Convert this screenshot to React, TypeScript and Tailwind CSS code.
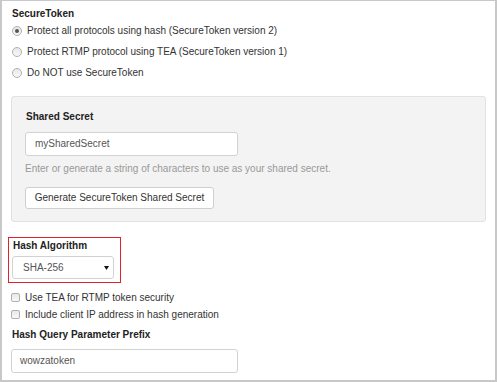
import React from 'react';

const Radio: React.FC<{ label: string; checked?: boolean }> = ({ label, checked }) => (
  <label className="flex items-center h-[21px] pl-[1px]">
    <span className="w-[10px] h-[10px] rounded-full border border-[#b0b0b0] bg-gradient-to-b from-[#e8e8e8] to-[#f8f8f8] flex items-center justify-center shrink-0">
      {checked && <span className="w-[4px] h-[4px] rounded-full bg-[#555]" />}
    </span>
    <span className="ml-[5px] text-[#333]">{label}</span>
  </label>
);

const Checkbox: React.FC<{ label: string }> = ({ label }) => (
  <label className="flex items-center h-[17px]">
    <span className="w-[9px] h-[9px] rounded-[2px] border border-[#b0b0b0] bg-gradient-to-b from-[#e8e8e8] to-[#f8f8f8] shrink-0" />
    <span className="ml-[5px] text-[#333]">{label}</span>
  </label>
);

const TextInput: React.FC<{ value: string; className?: string }> = ({ value, className }) => (
  <div className={`h-[24px] bg-white border border-[#d2d2d2] rounded-[3px] flex items-center text-[#555] ${className ?? ''}`}>
    {value}
  </div>
);

export default function App() {
  return (
    <div
      className="w-[497px] h-[382px] bg-white border-[#c8c8c8] border-t border-l-2 border-r-2 border-b-2 px-[9px] pt-[3px] text-[10px] leading-[14px]"
      style={{ fontFamily: '"Liberation Sans", Arial, sans-serif' }}
    >
      <h3 className="h-[16px] leading-[20px] font-bold text-[#222] pl-[1px]">SecureToken</h3>
      <div className="flex flex-col">
        <Radio label="Protect all protocols using hash (SecureToken version 2)" checked />
        <Radio label="Protect RTMP protocol using TEA (SecureToken version 1)" />
        <Radio label="Do NOT use SecureToken" />
      </div>

      <div className="mt-[13px] h-[126px] bg-[#f3f3f3] border border-[#e2e2e2] rounded-[3px] pt-[12px] pl-[13px]">
        <div className="h-[16px] leading-[16px] font-bold text-[#222] pl-[1px]">Shared Secret</div>
        <TextInput value="mySharedSecret" className="mt-[7px] w-[213px] h-[23px] pl-[9px]" />
        <p className="mt-[6px] text-[#999]">Enter or generate a string of characters to use as your shared secret.</p>
        <button className="mt-[11px] h-[22px] w-[189px] bg-white border border-[#cfcfcf] rounded-[3px] text-[#333] flex items-center justify-center">
          Generate SecureToken Shared Secret
        </button>
      </div>

      <div className="mt-[15px] -ml-[3px] w-[113px] h-[46px] border border-[#e0232b] pl-[3px] pt-[1px]">
        <div className="h-[13px] leading-[13px] font-bold text-[#222] pl-[1px]">Hash Algorithm</div>
        <div className="mt-[4px] w-[102px] h-[23px] bg-white border border-[#d2d2d2] rounded-[3px] flex items-center justify-between pl-[10px] pr-[4px] text-[#555]">
          <span>SHA-256</span>
          <svg width="5" height="4" viewBox="0 0 5 4">
            <path d="M0 0H5L2.5 4Z" fill="#111" />
          </svg>
        </div>
      </div>

      <div className="mt-[6px] flex flex-col">
        <Checkbox label="Use TEA for RTMP token security" />
        <Checkbox label="Include client IP address in hash generation" />
      </div>

      <div className="mt-[4px] h-[16px] leading-[16px] font-bold text-[#222] pl-[1px]">Hash Query Parameter Prefix</div>
      <TextInput value="wowzatoken" className="mt-[6px] w-[227px] pl-[8px]" />
    </div>
  );
}
